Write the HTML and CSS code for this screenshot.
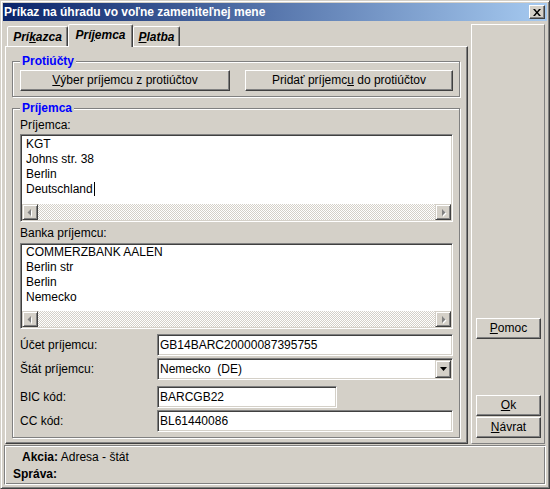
FILE: index.html
```html
<!DOCTYPE html>
<html lang="sk">
<head>
<meta charset="utf-8">
<title>Príkaz na úhradu vo voľne zameniteľnej mene</title>
<link rel="stylesheet" href="styles.css">
</head>
<body>
<div class="window">
  <div class="titlebar">
    <span class="title">Príkaz na úhradu vo voľne zameniteľnej mene</span>
    <span class="close"><svg width="8" height="7" viewBox="0 0 8 7"><path d="M0 0h2l2 2.4L6 0h2L5 3.5 8 7H6L4 4.6 2 7H0l3-3.5z" fill="#000"/></svg></span>
  </div>
  <div class="main">
    <div class="left">
      <div class="tabs">
        <div class="tab t1">Prí<u>k</u>azca</div>
        <div class="tab t2 active">Prí<u>j</u>emca</div>
        <div class="tab t3"><u>P</u>latba</div>
      </div>
      <div class="panel">
        <fieldset class="group g1">
          <legend>Protiúčty</legend>
          <div class="btnrow">
            <button class="btn bw1"><u>V</u>ýber príjemcu z protiúčtov</button>
            <button class="btn bw2">Pridať príjemc<u>u</u> do protiúčtov</button>
          </div>
        </fieldset>
        <fieldset class="group g2">
          <legend>Príjemca</legend>
          <div class="lbl">Príjemca:</div>
          <div class="memo m1">
            <div class="memo-text">KGT<br>Johns str. 38<br>Berlin<br>Deutschland<span class="caret"></span></div>
            <div class="hscroll">
              <span class="sbtn"><svg width="14" height="14" viewBox="0 0 14 14"><path d="M8 4v7L4.5 7.5z" fill="#fff" transform="translate(1 1)"/><path d="M8 4v7L4.5 7.5z" fill="#808080"/></svg></span>
              <span class="track"></span>
              <span class="sbtn"><svg width="14" height="14" viewBox="0 0 14 14"><path d="M6 4v7l3.5-3.5z" fill="#fff" transform="translate(1 1)"/><path d="M6 4v7l3.5-3.5z" fill="#808080"/></svg></span>
            </div>
          </div>
          <div class="lbl lbl2">Banka príjemcu:</div>
          <div class="memo m2">
            <div class="memo-text">COMMERZBANK AALEN<br>Berlin str<br>Berlin<br>Nemecko</div>
            <div class="hscroll">
              <span class="sbtn"><svg width="14" height="14" viewBox="0 0 14 14"><path d="M8 4v7L4.5 7.5z" fill="#fff" transform="translate(1 1)"/><path d="M8 4v7L4.5 7.5z" fill="#808080"/></svg></span>
              <span class="track"></span>
              <span class="sbtn"><svg width="14" height="14" viewBox="0 0 14 14"><path d="M6 4v7l3.5-3.5z" fill="#fff" transform="translate(1 1)"/><path d="M6 4v7l3.5-3.5z" fill="#808080"/></svg></span>
            </div>
          </div>
          <div class="form">
            <div class="row"><span class="flabel">Účet príjemcu:</span><span class="field wide">GB14BARC20000087395755</span></div>
            <div class="row"><span class="flabel">Štát príjemcu:</span><span class="field wide combo"><span class="ctext">Nemecko&nbsp; (DE)</span><span class="cbtn"><svg width="7" height="4" viewBox="0 0 7 4"><path d="M0 0h7L3.5 4z" fill="#000"/></svg></span></span></div>
            <div class="row r3"><span class="flabel">BIC kód:</span><span class="field narrow">BARCGB22</span></div>
            <div class="row"><span class="flabel">CC kód:</span><span class="field wide">BL61440086</span></div>
          </div>
        </fieldset>
      </div>
    </div>
    <div class="right">
      <button class="btn side pomoc"><u>P</u>omoc</button>
      <button class="btn side ok"><u>O</u>k</button>
      <button class="btn side"><u>N</u>ávrat</button>
    </div>
  </div>
  <div class="status">
    <div class="sline s1"><b>Akcia:</b> Adresa - štát</div>
    <div class="sline"><b>Správa:</b></div>
  </div>
</div>
</body>
</html>
```

FILE: styles.css
```css
* { box-sizing: border-box; }

body {
  margin: 0;
  background: #d4d0c8;
  font-family: "Liberation Sans", Arial, sans-serif;
  font-size: 12px;
  color: #000;
}

u { text-decoration: underline; text-underline-offset: 1px; }

.window {
  width: 550px;
  height: 489px;
  border: 1px solid;
  border-color: #d4d0c8 #404040 #404040 #d4d0c8;
  box-shadow: inset 1px 1px #fff, inset -1px -1px #808080;
  padding: 2px;
  display: flex;
  flex-direction: column;
  background: #d4d0c8;
}

.titlebar {
  height: 18px;
  flex: none;
  display: flex;
  align-items: center;
  background: linear-gradient(to right, #0a246a, #a6caf0);
  color: #fff;
  font-weight: bold;
  padding-left: 1px;
}

.title { flex: 1; line-height: 18px; white-space: nowrap; }

.close {
  width: 16px;
  height: 14px;
  margin-right: 2px;
  background: #d4d0c8;
  border: 1px solid;
  border-color: #fff #404040 #404040 #fff;
  box-shadow: inset -1px -1px #808080;
  display: flex;
  align-items: center;
  justify-content: center;
  padding-right: 1px;
}
.close svg { display: block; }

.main {
  display: flex;
  gap: 3px;
  margin-top: 3px;
  height: 420px;
  flex: none;
  padding: 0 2px;
}

.left {
  width: 463px;
  display: flex;
  flex-direction: column;
}

.tabs {
  height: 22px;
  flex: none;
  display: flex;
  align-items: flex-end;
  padding-left: 2px;
  position: relative;
  z-index: 1;
}

.tab {
  height: 20px;
  border: 1px solid;
  border-bottom: none;
  border-color: #fff #404040 transparent #fff;
  box-shadow: inset -1px 0 #808080;
  font-weight: bold;
  font-style: italic;
  display: flex;
  align-items: center;
  justify-content: center;
  background: #d4d0c8;
  border-top-left-radius: 2px;
  border-top-right-radius: 2px;
}
.tab.active { height: 23px; margin-bottom: -1px; padding-bottom: 2px; }
.t1 { width: 61px; }
.t2 { width: 65px; }
.t3 { width: 47px; }

.panel {
  flex: 1;
  border: 1px solid;
  border-color: #fff #404040 #404040 #fff;
  box-shadow: inset -1px -1px #808080;
  padding: 7px 7px 0 6px;
}

.group {
  margin: 0;
  min-width: 0;
  border: 1px solid #808080;
  box-shadow: 1px 1px #fff, inset 1px 1px #fff;
  padding: 2px 6px 5px 7px;
}
.group legend {
  padding: 0 2px;
  margin-left: 0;
  line-height: 14px;
  font-weight: bold;
  color: #0000ff;
  background: #d4d0c8;
}
.g2 { margin-top: 4px; padding-top: 3px; }

.btn {
  font-family: "Liberation Sans", Arial, sans-serif;
  font-size: 12px;
  color: #000;
  background: #d4d0c8;
  border: 1px solid;
  border-color: #fff #404040 #404040 #fff;
  box-shadow: inset -1px -1px #808080;
  padding: 0;
  height: 21px;
  line-height: 17px;
}

.btnrow { display: flex; justify-content: space-between; }
.bw1 { width: 210px; }
.bw2 { width: 208px; }

.lbl { line-height: 14px; }
.lbl2 { margin-top: 4px; }

.memo {
  border: 1px solid;
  border-color: #808080 #fff #fff #808080;
  box-shadow: inset 1px 1px #404040, inset -1px -1px #d4d0c8;
  background: #fff;
  padding: 1px;
  display: flex;
  flex-direction: column;
  margin-top: 2px;
}
.m1 { height: 88px; }
.m2 { height: 86px; margin-top: 3px; }

.memo-text {
  flex: 1;
  padding: 1px 4px 0 4px;
  line-height: 15px;
}
.m2 .memo-text { padding-top: 0; }

.caret {
  display: inline-block;
  width: 1px;
  height: 14px;
  background: #000;
  vertical-align: -3px;
  margin-left: 1px;
}

.hscroll { height: 16px; display: flex; flex: none; }
.track {
  flex: 1;
  background-image: conic-gradient(#fff 25%, #d4d0c8 0 50%, #fff 0 75%, #d4d0c8 0);
  background-size: 2px 2px;
}
.sbtn {
  width: 16px;
  height: 16px;
  background: #d4d0c8;
  border: 1px solid;
  border-color: #d4d0c8 #404040 #404040 #d4d0c8;
  box-shadow: inset 1px 1px #fff, inset -1px -1px #808080;
}
.sbtn svg { display: block; }

.form { margin-top: 5px; }
.row { display: flex; align-items: center; height: 22px; }
.row + .row { margin-top: 2px; }
.row.r3 { margin-top: 6px; }
.flabel { width: 137px; }

.field {
  height: 22px;
  border: 1px solid;
  border-color: #808080 #fff #fff #808080;
  box-shadow: inset 1px 1px #404040, inset -1px -1px #d4d0c8;
  background: #fff;
  padding: 1px 1px 1px 2px;
  line-height: 18px;
  white-space: nowrap;
}
.wide { width: 296px; }
.narrow { width: 180px; }
.combo { display: flex; align-items: center; }
.ctext { flex: 1; }
.cbtn {
  width: 16px;
  height: 18px;
  background: #d4d0c8;
  border: 1px solid;
  border-color: #d4d0c8 #404040 #404040 #d4d0c8;
  box-shadow: inset 1px 1px #fff, inset -1px -1px #808080;
  display: flex;
  align-items: center;
  justify-content: center;
}
.cbtn svg { display: block; }

.right {
  width: 74px;
  border: 1px solid;
  border-color: #fff #808080 #808080 #fff;
  display: flex;
  flex-direction: column;
  align-items: flex-start;
  justify-content: flex-end;
  padding: 0 0 5px 4px;
}
.side { width: 65px; }
.pomoc { margin-bottom: 56px; }
.ok { margin-bottom: 1px; }

.status {
  margin: 1px 1px 0;
  height: 40px;
  flex: none;
  border: 1px solid;
  border-color: #808080 #fff #fff #808080;
  box-shadow: inset 1px 1px #fff, inset -1px -1px #808080;
  padding: 3px 0 0 8px;
  line-height: 17px;
}
.s1 { margin-left: 9px; }
```
